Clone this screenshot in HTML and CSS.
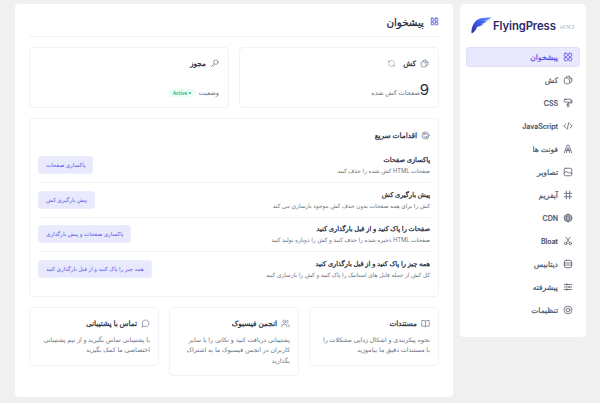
FILE: index.html
```html
<!DOCTYPE html>
<html lang="fa" dir="rtl">
<head>
<meta charset="utf-8">
<title>FlyingPress</title>
<link rel="stylesheet" href="styles.css">
</head>
<body>
<div class="app">
  <aside class="sidebar">
    <div class="brand" dir="ltr">
      <svg class="logo" viewBox="0 0 22 18"><defs><linearGradient id="lg" x1="0" y1="1" x2="1" y2="0"><stop offset="0" stop-color="#2f2a9c"/><stop offset=".55" stop-color="#3f5cf0"/><stop offset="1" stop-color="#6f9bff"/></linearGradient></defs><path fill="url(#lg)" d="M1 17.500C.4 11 3.500 3.500 10 1.500 14 .4 18 .5 22 .5 20 2.800 17 4 13.500 4.300 15 4.500 16.300 4.300 17.500 4 16 6.200 13.500 7.200 10.500 7.500 11.500 7.800 12.500 7.800 13.500 7.600 11.500 9.500 9 10 7 10.300 5.800 12.500 4.500 16 1 17.500Z"/></svg>
      <span class="brand-name">FlyingPress</span>
      <span class="version">v4.14.2</span>
    </div>
    <nav class="nav">
      <a class="nav-item active"><svg class="ico" viewBox="0 0 24 24"><rect x="3" y="3" width="7.500" height="7.500" rx="2"/><rect x="13.500" y="3" width="7.500" height="7.500" rx="2"/><rect x="3" y="13.500" width="7.500" height="7.500" rx="2"/><rect x="13.500" y="13.500" width="7.500" height="7.500" rx="2"/></svg><span>پیشخوان</span></a>
      <a class="nav-item"><svg class="ico" viewBox="0 0 24 24"><path d="M8 7V6a3 3 0 0 1 3-3h4l6 6v6a3 3 0 0 1-3 3h-1"/><path d="M15 3v3a3 3 0 0 0 3 3h3"/><path d="M3 10a3 3 0 0 1 3-3h4l6 5v6a3 3 0 0 1-3 3H6a3 3 0 0 1-3-3Z"/></svg><span>کش</span></a>
      <a class="nav-item"><svg class="ico" viewBox="0 0 24 24"><rect x="3" y="3" width="17" height="7" rx="2"/><path d="M20 6h1.500v6H12v3"/><rect x="10" y="15" width="4" height="6" rx="1"/></svg><span class="latin">CSS</span></a>
      <a class="nav-item"><svg class="ico" viewBox="0 0 24 24"><path d="m7 7-5 5 5 5M17 7l5 5-5 5M14 4l-4 16"/></svg><span class="latin">JavaScript</span></a>
      <a class="nav-item"><svg class="ico" viewBox="0 0 24 24"><path d="M3 21 10 3h4l7 18M6 15h12M8 21l4-12 4 12"/></svg><span>فونت ها</span></a>
      <a class="nav-item"><svg class="ico" viewBox="0 0 24 24"><rect x="3" y="3" width="18" height="18" rx="3"/><path d="m3 15 5-5 5 5 3-3 5 5"/></svg><span>تصاویر</span></a>
      <a class="nav-item"><svg class="ico" viewBox="0 0 24 24"><path d="M3 8h18M3 16h18M8 3v18M16 3v18"/></svg><span>آیفریم</span></a>
      <a class="nav-item"><svg class="ico" viewBox="0 0 24 24"><circle cx="12" cy="12" r="9"/><path d="M3 12h18M4.500 7.500h15M4.500 16.500h15M12 3c-5 5-5 13 0 18M12 3c5 5 5 13 0 18"/></svg><span class="latin">CDN</span></a>
      <a class="nav-item"><svg class="ico" viewBox="0 0 24 24"><circle cx="6.500" cy="18" r="3"/><circle cx="17.500" cy="18" r="3"/><path d="M8.500 15.500 17 3M15.500 15.500 7 3"/></svg><span class="latin">Bloat</span></a>
      <a class="nav-item"><svg class="ico" viewBox="0 0 24 24"><rect x="3" y="3" width="18" height="18" rx="5"/><path d="M3 9.500h18M3 14.500h18"/></svg><span>دیتابیس</span></a>
      <a class="nav-item"><svg class="ico" viewBox="0 0 24 24"><path d="M3 6h18M3 12h18M3 18h18"/><path d="M9 4v4M15 10v4M9 16v4"/></svg><span>پیشرفته</span></a>
      <a class="nav-item"><svg class="ico" viewBox="0 0 24 24"><path d="M12 2.500 15 4l3.500.300L20 7.500 21.500 12 20 16.500l-1.500 3.200L15 20l-3 1.500L9 20l-3.500-.300L4 16.500 2.500 12 4 7.500l1.500-3.200L9 4Z"/><circle cx="12" cy="12" r="4.500"/></svg><span>تنظیمات</span></a>
    </nav>
  </aside>

  <main class="panel">
    <header class="page-head">
      <svg class="ico head-ico" viewBox="0 0 24 24"><rect x="3" y="3" width="7.500" height="7.500" rx="2"/><rect x="13.500" y="3" width="7.500" height="7.500" rx="2"/><rect x="3" y="13.500" width="7.500" height="7.500" rx="2"/><rect x="13.500" y="13.500" width="7.500" height="7.500" rx="2"/></svg>
      <h1>پیشخوان</h1>
    </header>

    <section class="two-col">
      <div class="card stat">
        <div class="card-title">
          <svg class="ico" viewBox="0 0 24 24"><path d="M8 7V6a3 3 0 0 1 3-3h4l6 6v6a3 3 0 0 1-3 3h-1"/><path d="M15 3v3a3 3 0 0 0 3 3h3"/><path d="M3 10a3 3 0 0 1 3-3h4l6 5v6a3 3 0 0 1-3 3H6a3 3 0 0 1-3-3Z"/></svg>
          <h2>کش</h2>
          <svg class="ico refresh" viewBox="0 0 24 24"><path d="M20 11A8 8 0 0 0 5 8M4 4v4h4M4 13a8 8 0 0 0 15 3M20 20v-4h-4"/></svg>
        </div>
        <div class="stat-row"><span class="stat-num" dir="ltr">9</span><span class="stat-label">صفحات کش شده</span></div>
      </div>
      <div class="card stat">
        <div class="card-title">
          <svg class="ico" viewBox="0 0 24 24"><circle cx="15.500" cy="8.500" r="6"/><path d="m11 13-8 8M7 17l3 3"/></svg>
          <h2>مجوز</h2>
        </div>
        <div class="stat-row status"><span class="stat-label">وضعیت</span><span class="badge" dir="ltr">Active<i class="dot"></i></span></div>
      </div>
    </section>

    <section class="card quick">
      <div class="card-title">
        <svg class="ico" viewBox="0 0 24 24"><circle cx="12" cy="12" r="9.500"/><path d="M17 10.500A5.200 5.200 0 0 0 8 8.500M7.500 6v3h3M7 13.500a5.200 5.200 0 0 0 9 2M16.500 18v-3h-3"/></svg>
        <h2>اقدامات سریع</h2>
      </div>
      <div class="action">
        <div class="action-text"><h3>پاکسازی صفحات</h3><p>صفحات HTML کش شده را حذف کنید</p></div>
        <button class="btn">پاکسازی صفحات</button>
      </div>
      <div class="action">
        <div class="action-text"><h3>پیش بارگیری کش</h3><p>کش را برای همه صفحات بدون حذف کش موجود بازسازی می کند</p></div>
        <button class="btn">پیش بارگیری کش</button>
      </div>
      <div class="action">
        <div class="action-text"><h3>صفحات را پاک کنید و از قبل بارگذاری کنید</h3><p>صفحات HTML ذخیره شده را حذف کنید و کش را دوباره تولید کنید</p></div>
        <button class="btn">پاکسازی صفحات و پیش بارگذاری</button>
      </div>
      <div class="action">
        <div class="action-text"><h3>همه چیز را پاک کنید و از قبل بارگذاری کنید</h3><p>کل کش از جمله فایل های استاتیک را پاک کنید و کش را بازسازی کنید</p></div>
        <button class="btn">همه چیز را پاک کنید و از قبل بارگذاری کنید</button>
      </div>
    </section>

    <section class="three-col">
      <div class="card help">
        <div class="card-title"><svg class="ico" viewBox="0 0 24 24"><path d="M12 7a3 3 0 0 0-3-3H2v15h7a3 3 0 0 1 3 2 3 3 0 0 1 3-2h7V4h-7a3 3 0 0 0-3 3ZM12 7v14"/></svg><h2>مستندات</h2></div>
        <p>نحوه پیکربندی و اشکال زدایی مشکلات را با مستندات دقیق ما بیاموزید</p>
      </div>
      <div class="card help">
        <div class="card-title"><svg class="ico" viewBox="0 0 24 24"><circle cx="9" cy="7" r="4"/><path d="M2 21v-1a6 6 0 0 1 6-6h2a6 6 0 0 1 6 6v1M16 3.100a4 4 0 0 1 0 7.800M19 14.300a6 6 0 0 1 3 5.200V21"/></svg><h2>انجمن فیسبوک</h2></div>
        <p>پشتیبانی دریافت کنید و نکاتی را با سایر کاربران در انجمن فیسبوک ما به اشتراک بگذارید</p>
      </div>
      <div class="card help">
        <div class="card-title"><svg class="ico" viewBox="0 0 24 24"><path d="M3 21l1.600-4.500A9 9 0 1 1 8 19.700Z"/></svg><h2>تماس با پشتیبانی</h2></div>
        <p>با پشتیبانی تماس بگیرید و از تیم پشتیبانی اختصاصی ما کمک بگیرید</p>
      </div>
    </section>
  </main>
</div>
</body>
</html>
```
FILE: styles.css
```css
* { box-sizing: border-box; }
html, body { margin: 0; height: 100%; }
body {
  background: #f0f0f1;
  color: #1f2937;
  font-family: Inter, "DejaVu Sans", sans-serif;
  overflow: hidden;
}
.app {
  display: flex;
  align-items: flex-start;
  gap: 7px;
  padding: 4px 14px 0 15px;
}
.ico {
  width: 12px;
  height: 12px;
  flex: none;
  fill: none;
  stroke: #4b5563;
  stroke-width: 1.800;
  stroke-linecap: round;
  stroke-linejoin: round;
}

.sidebar {
  width: 126px;
  height: 333px;
  flex: none;
  background: #fff;
  border-radius: 4px;
  padding: 10px 6px;
}
.brand {
  display: flex;
  align-items: center;
  height: 21px;
  margin: 1px 4px 11px 4px;
}
.logo { width: 22px; height: 17px; flex: none; }
.brand-name {
  font-size: 11.300px;
  font-weight: 600;
  color: #2b2a6b;
  margin-left: 1px;
  letter-spacing: -.1px;
}
.version {
  font-size: 4.500px;
  color: #94a3b8;
  margin-left: 4px;
  margin-top: 3px;
}
.nav { display: flex; flex-direction: column; gap: 3px; }
.nav-item {
  display: flex;
  align-items: center;
  gap: 5px;
  height: 20px;
  padding: 0 6px;
  border: 1px solid transparent;
  border-radius: 3px;
  font-size: 7.600px;
  font-weight: 500;
  -webkit-text-stroke: .2px currentColor;
  color: #475569;
}
.nav-item .latin { font-size: 7px; }
.nav-item.active {
  background: #e8e9fd;
  border-color: #dfe1fb;
  color: #4f46e5;
}
.nav-item.active .ico { stroke: #4f46e5; }
.nav-item .ico { width: 10px; height: 10px; }

.panel {
  width: 438px;
  height: 393px;
  flex: none;
  background: #fff;
  border-radius: 4px;
  padding: 0 14px;
}
.page-head {
  display: flex;
  align-items: center;
  gap: 6px;
  height: 33px;
  padding-top: 3px;
  border-bottom: 1px solid #f1f2f4;
  margin-bottom: 10px;
}
.head-ico { width: 9px; height: 9px; stroke: #4f46e5; stroke-width: 2.200; }
h1 {
  margin: 0;
  font-size: 10.300px;
  font-weight: 500;
  -webkit-text-stroke: .25px currentColor;
  color: #1e293b;
}
.card {
  background: #fff;
  border: 1px solid #f1f2f4;
  border-radius: 4px;
}
.two-col { display: flex; gap: 10px; margin-bottom: 10px; }
.stat { flex: 1; height: 61px; padding: 11px 9px; }
.card-title { display: flex; align-items: center; gap: 4px; }
.card-title .ico { width: 9px; height: 9px; stroke: #64748b; }
h2 {
  margin: 0;
  font-size: 7.300px;
  font-weight: 500;
  -webkit-text-stroke: .25px currentColor;
  color: #1e293b;
}
.refresh { margin-right: 3px; }
.card-title .refresh { stroke: #94a3b8; }
.stat-row { display: flex; align-items: baseline; margin-top: 14px; }
.stat-num { font-size: 15px; color: #1e293b; line-height: 16px; }
.stat-label { font-size: 6.500px; color: #6b7280; }
.status { margin-top: 21px; align-items: center; gap: 3px; }
.badge {
  display: flex;
  align-items: center;
  gap: 2px;
  height: 8px;
  padding: 0 4.500px;
  border-radius: 4px;
  background: #ecfdf5;
  color: #10b981;
  font-size: 4.800px;
  font-weight: 600;
}
.dot { width: 2px; height: 2px; border-radius: 50%; background: #10b981; }

.quick { height: 179px; padding: 11.500px 8px 0; margin-bottom: 10px; }
.quick > .card-title { margin-bottom: 9px; }
.action {
  display: flex;
  justify-content: space-between;
  align-items: center;
  height: 34.500px;
  border-bottom: 1px solid #f1f2f4;
}
.action:last-child { border-bottom: 0; }
h3 {
  margin: 0 0 3px;
  font-size: 6.600px;
  font-weight: 500;
  -webkit-text-stroke: .25px currentColor;
  color: #1e293b;
}
.action-text p { margin: 0; font-size: 5.800px; color: #6b7280; }
.btn {
  height: 18px;
  padding: 0 7px;
  border: 1px solid #eceefe;
  border-radius: 3px;
  background: #e8e9fd;
  color: #5b54e8;
  font: 400 5.600px Inter, "DejaVu Sans", sans-serif;
}

.three-col { display: flex; align-items: flex-start; gap: 10px; }
.help { flex: 1; padding: 11px 8px 9px; }
.help .card-title { margin-bottom: 7px; }
.help p { margin: 0; font-size: 6.300px; line-height: 10.300px; color: #6b7280; }
```
